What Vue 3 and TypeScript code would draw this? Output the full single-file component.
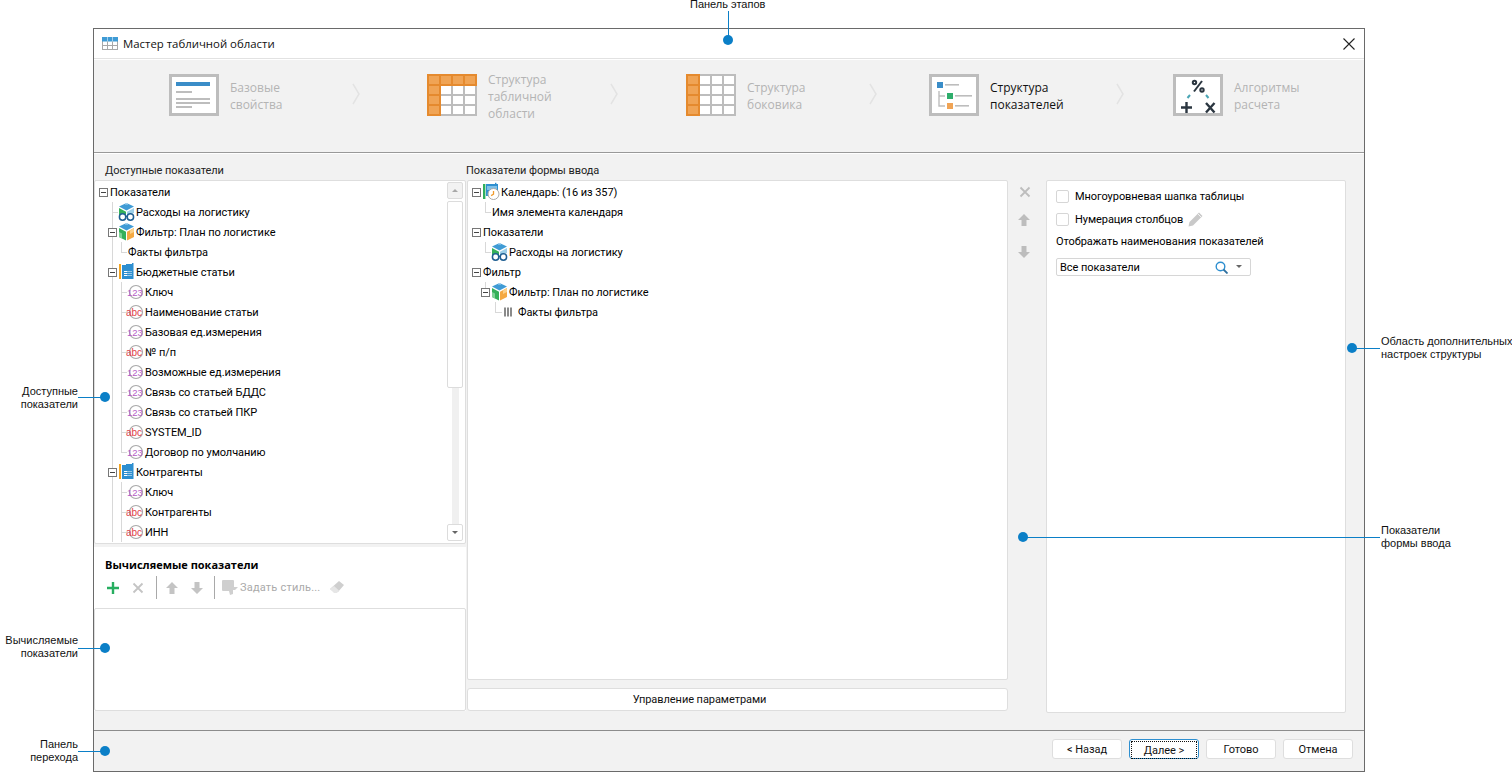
<script setup lang="ts">
interface Row {
  text: string
  pad: number
  exp?: boolean
  icon?: string
  iconW?: number
  gap?: number
  v?: number[]
  half?: number[]
  h?: [number, number]
}

const kid = (text: string, icon: string): Row => ({ text, pad: 33, icon, v: [18, 27], h: [27, 6] })
const lastKid = (text: string, icon: string): Row => ({ text, pad: 33, icon, v: [18], half: [27], h: [27, 6] })

const leftRows: Row[] = [
  { text: 'Показатели', pad: 5, exp: true },
  { text: 'Расходы на логистику', pad: 24, icon: 'i-cube-glasses', v: [18], h: [18, 6] },
  { text: 'Фильтр: План по логистике', pad: 14, exp: true, icon: 'i-cube', v: [18] },
  { text: 'Факты фильтра', pad: 34, v: [18], half: [27], h: [27, 6] },
  { text: 'Бюджетные статьи', pad: 14, exp: true, icon: 'i-dict', v: [18] },
  kid('Ключ', 'i-num'),
  kid('Наименование статьи', 'i-abc'),
  kid('Базовая ед.измерения', 'i-num'),
  kid('№ п/п', 'i-abc'),
  kid('Возможные ед.измерения', 'i-num'),
  kid('Связь со статьей БДДС', 'i-num'),
  kid('Связь со статьей ПКР', 'i-num'),
  kid('SYSTEM_ID', 'i-abc'),
  lastKid('Договор по умолчанию', 'i-num'),
  { text: 'Контрагенты', pad: 14, exp: true, icon: 'i-dict', v: [18] },
  kid('Ключ', 'i-num'),
  kid('Контрагенты', 'i-abc'),
  kid('ИНН', 'i-abc')
]

const midRows: Row[] = [
  { text: 'Календарь: (16 из 357)', pad: 5, exp: true, icon: 'i-cal', gap: 1 },
  { text: 'Имя элемента календаря', pad: 25, half: [18], h: [18, 6] },
  { text: 'Показатели', pad: 5, exp: true },
  { text: 'Расходы на логистику', pad: 24, icon: 'i-cube-glasses', half: [18], h: [18, 6] },
  { text: 'Фильтр', pad: 5, exp: true },
  { text: 'Фильтр: План по логистике', pad: 14, exp: true, icon: 'i-cube', half: [18] },
  { text: 'Факты фильтра', pad: 37, icon: 'i-bars', iconW: 8, gap: 6, half: [28], h: [28, 7] }
]

const trees = { leftRows, midRows }

interface Step {
  title: string[]
  icon: string
  width: number
  active?: boolean
  chevron?: boolean
}

const steps: Step[] = [
  { title: ['Базовые', 'свойства'], icon: 's-base', width: 258, chevron: true },
  { title: ['Структура', 'табличной', 'области'], icon: 's-table', width: 259, chevron: true },
  { title: ['Структура', 'боковика'], icon: 's-side', width: 243, chevron: true },
  { title: ['Структура', 'показателей'], icon: 's-tree', width: 244, active: true, chevron: true },
  { title: ['Алгоритмы', 'расчета'], icon: 's-calc', width: 180 }
]

const footerButtons = ['< Назад', 'Далее >', 'Готово', 'Отмена']
</script>

<template>
  <div class="page">
    <svg class="defs" width="0" height="0" aria-hidden="true">
      <defs>
        <symbol id="i-cube" viewBox="0 0 17 20">
          <polygon points="8.5,1 16,4.5 8.5,8.5 1,4.5" fill="#3f9bd5" />
          <rect x="7" y="1" width="3" height="1.6" fill="#9fd0ee" />
          <polygon points="1,6 8,9.8 8,18.5 1,15" fill="#35b05a" />
          <polygon points="9,9.8 16,6 16,15 9,18.5" fill="#f5a941" />
          <polygon points="1,10 4,11.6 4,16.5 1,15" fill="#7fd296" />
          <polygon points="12,8.4 16,6 16,10 12,12" fill="#fbd089" />
        </symbol>
        <symbol id="i-cube-glasses" viewBox="0 0 17 20">
          <polygon points="8.5,1 16,4.5 8.5,8.5 1,4.5" fill="#3f9bd5" />
          <rect x="7" y="1" width="3" height="1.6" fill="#9fd0ee" />
          <polygon points="1,6 8,9.8 8,13 1,13" fill="#35b05a" />
          <polygon points="9,9.8 16,6 16,11 9,13" fill="#9ccfe8" />
          <circle cx="4.6" cy="15" r="3.2" fill="#fff" stroke="#1f5f92" stroke-width="1.5" />
          <circle cx="12.4" cy="15" r="3.2" fill="#fff" stroke="#1f5f92" stroke-width="1.5" />
          <rect x="7.4" y="13.8" width="2.2" height="1.2" fill="#1f5f92" />
        </symbol>
        <symbol id="i-dict" viewBox="0 0 17 20">
          <rect x="1" y="2" width="2" height="15" fill="#f5a623" />
          <polygon points="4,3 8,3 8,2 14,2 14,1 15.5,1 15.5,17 4,17" fill="#2e8fd0" />
          <g fill="#fff">
            <rect x="6" y="9" width="3.500" height="1" />
            <rect x="6" y="11" width="3.500" height="1" />
            <rect x="6" y="13" width="3.500" height="1" />
            <rect x="10.500" y="9" width="1" height="1" />
            <rect x="12.500" y="9" width="1" height="1" />
            <rect x="10.500" y="11" width="1" height="1" />
            <rect x="12.500" y="11" width="1" height="1" />
            <rect x="10.500" y="13" width="1" height="1" />
            <rect x="12.500" y="13" width="1" height="1" />
          </g>
        </symbol>
        <symbol id="i-cal" viewBox="0 0 17 20">
          <rect x="0" y="2" width="2.4" height="15" fill="#2fae5c" />
          <rect x="3" y="2" width="12" height="12" fill="#2e8fd0" />
          <rect x="4" y="4" width="10" height="4" fill="#7ec0e8" />
          <rect x="12" y="0.8" width="1.4" height="3" fill="#2e8fd0" />
          <circle cx="10.5" cy="12" r="5.5" fill="#fff" stroke="#a8a8a8" stroke-width="1" />
          <path d="M10.5 9v3.2l-2.4 1.4" fill="none" stroke="#f09a2b" stroke-width="1.3" />
        </symbol>
        <symbol id="i-bars" viewBox="0 0 8 10">
          <rect x="0" y="0.5" width="2" height="9" fill="#8a8a8a" />
          <rect x="3" y="0.5" width="2" height="9" fill="#8a8a8a" />
          <rect x="6" y="0.5" width="2" height="9" fill="#8a8a8a" />
        </symbol>
        <symbol id="i-up" viewBox="0 0 14 14">
          <polygon points="7,1 13,7 9.5,7 9.5,13 4.5,13 4.5,7 1,7" fill="currentColor" />
        </symbol>
        <symbol id="i-down" viewBox="0 0 14 14">
          <polygon points="7,13 13,7 9.5,7 9.5,1 4.5,1 4.5,7 1,7" fill="currentColor" />
        </symbol>
        <symbol id="i-x" viewBox="0 0 12 12">
          <path d="M1.5 1.5l9 9M10.5 1.5l-9 9" stroke="currentColor" stroke-width="1.8" fill="none" />
        </symbol>
        <symbol id="s-base" viewBox="0 0 50 42">
          <rect x="1.5" y="1.5" width="47" height="39" fill="#fff" stroke="#bdbdbd" stroke-width="3" />
          <rect x="7" y="8" width="34" height="4" fill="#3a8dc8" />
          <g fill="#bdbdbd">
            <rect x="7" y="17" width="16" height="2" />
            <rect x="7" y="24" width="34" height="2" />
            <rect x="7" y="28" width="34" height="2" />
            <rect x="7" y="32" width="16" height="2" />
          </g>
        </symbol>
        <symbol id="s-table" viewBox="0 0 50 42">
          <rect width="50" height="42" fill="#bdbdbd" />
          <g fill="#fff">
            <rect x="14" y="12" width="10" height="8" /><rect x="26" y="12" width="10" height="8" /><rect x="38" y="12" width="10" height="8" />
            <rect x="14" y="22" width="10" height="8" /><rect x="26" y="22" width="10" height="8" /><rect x="38" y="22" width="10" height="8" />
            <rect x="14" y="32" width="10" height="8" /><rect x="26" y="32" width="10" height="8" /><rect x="38" y="32" width="10" height="8" />
          </g>
          <rect width="50" height="12" fill="#e58a2e" />
          <rect width="14" height="42" fill="#e58a2e" />
          <g fill="#f0a455">
            <rect x="2" y="2" width="10" height="8" /><rect x="14" y="2" width="10" height="8" /><rect x="26" y="2" width="10" height="8" /><rect x="38" y="2" width="10" height="8" />
            <rect x="2" y="12" width="10" height="8" /><rect x="2" y="22" width="10" height="8" /><rect x="2" y="32" width="10" height="8" />
          </g>
        </symbol>
        <symbol id="s-side" viewBox="0 0 50 42">
          <rect width="50" height="42" fill="#bdbdbd" />
          <g fill="#fff">
            <rect x="14" y="2" width="10" height="8" /><rect x="26" y="2" width="10" height="8" /><rect x="38" y="2" width="10" height="8" />
            <rect x="14" y="12" width="10" height="8" /><rect x="26" y="12" width="10" height="8" /><rect x="38" y="12" width="10" height="8" />
            <rect x="14" y="22" width="10" height="8" /><rect x="26" y="22" width="10" height="8" /><rect x="38" y="22" width="10" height="8" />
            <rect x="14" y="32" width="10" height="8" /><rect x="26" y="32" width="10" height="8" /><rect x="38" y="32" width="10" height="8" />
          </g>
          <rect width="14" height="42" fill="#e58a2e" />
          <g fill="#f0a455">
            <rect x="2" y="2" width="10" height="8" /><rect x="2" y="12" width="10" height="8" /><rect x="2" y="22" width="10" height="8" /><rect x="2" y="32" width="10" height="8" />
          </g>
        </symbol>
        <symbol id="s-tree" viewBox="0 0 50 42">
          <rect x="1.5" y="1.5" width="47" height="39" fill="#fff" stroke="#bdbdbd" stroke-width="3" />
          <rect x="8" y="8" width="6" height="6" fill="#3a8dc8" />
          <rect x="16" y="10" width="14" height="1.6" fill="#bdbdbd" />
          <path d="M10 17v15h6M10 22h6" fill="none" stroke="#bdbdbd" stroke-width="1.4" />
          <rect x="18" y="19" width="6" height="6" fill="#2fae6c" />
          <rect x="26" y="21" width="17" height="1.6" fill="#bdbdbd" />
          <rect x="18" y="29" width="6" height="6" fill="#f0a455" />
          <rect x="26" y="31" width="14" height="1.6" fill="#bdbdbd" />
        </symbol>
        <symbol id="s-calc" viewBox="0 0 50 42">
          <rect x="1.5" y="1.5" width="47" height="39" fill="#fff" stroke="#bdbdbd" stroke-width="3" />
          <g stroke="#2b3640" stroke-width="2" fill="none">
            <circle cx="21.5" cy="8.5" r="1.7" />
            <circle cx="29" cy="16" r="1.7" />
            <path d="M29 7l-8 10.5" />
            <path d="M8 33.5h11M13.5 28v11" stroke-width="2.4" />
            <path d="M33 29l8.5 9.5M41.500 29L33 38.500" stroke-width="2.400" />
          </g>
          <path d="M14.500 24l2.500-3M33 21l2.500 3" stroke="#4aa6b5" stroke-width="2" fill="none" />
        </symbol>
      </defs>
    </svg>

    <div class="window">
      <header class="titlebar">
        <svg class="title-icon" width="16" height="13" viewBox="0 0 16 13">
          <rect x="0.500" y="0.500" width="15" height="12" fill="#fff" stroke="#a8a8a8" />
          <rect x="0" y="0" width="16" height="4.500" fill="#3f9bd5" />
          <path d="M5.500 0v13M10.500 0v13M0 8.500h16" stroke="#a8a8a8" fill="none" />
          <path d="M5.500 0v4.500M10.500 0v4.500" stroke="#9fd0ee" fill="none" />
        </svg>
        <span class="title-text">Мастер табличной области</span>
        <svg class="close" width="12" height="12" viewBox="0 0 12 12">
          <path d="M0.500 0.500l11 11M11.500 0.500l-11 11" stroke="#222" stroke-width="1.100" fill="none" />
        </svg>
      </header>

      <nav class="steps">
        <div v-for="s in steps" :key="s.icon" class="step" :style="{ width: s.width + 'px' }">
          <svg class="step-icon" width="50" height="42"><use :href="'#' + s.icon" /></svg>
          <div class="step-label" :class="{ active: s.active }">
            <div v-for="t in s.title" :key="t">{{ t }}</div>
          </div>
          <svg v-if="s.chevron" class="chevron" width="8" height="22" viewBox="0 0 8 22">
            <path d="M1 1l6 10-6 10" fill="none" stroke="#e3e3e3" stroke-width="1.500" />
          </svg>
        </div>
      </nav>

      <main class="content">
        <section class="col-left">
          <div class="caption">Доступные показатели</div>
          <div class="tree tree-left">
            <div v-for="(r, i) in trees.leftRows" :key="i" class="row" :style="{ paddingLeft: r.pad + 'px' }">
              <i v-for="x in r.v" :key="x" class="guide" :style="{ left: x + 'px' }"></i>
              <i v-for="x in r.half" :key="x" class="guide half" :style="{ left: x + 'px' }"></i>
              <i v-if="r.h" class="hguide" :style="{ left: r.h[0] + 'px', width: r.h[1] + 'px' }"></i>
              <span v-if="r.exp" class="exp"></span>
              <svg v-if="r.icon === 'i-num'" class="icon" width="17" height="20" viewBox="0 0 17 20">
                <circle cx="9" cy="10" r="6.500" fill="#fff" stroke="#a9a9a9" stroke-width="1.200" />
                <text x="0" y="13.500" class="icon-num">123</text>
              </svg>
              <svg v-else-if="r.icon === 'i-abc'" class="icon" width="17" height="20" viewBox="0 0 17 20">
                <circle cx="9" cy="10" r="6.500" fill="#fff" stroke="#a9a9a9" stroke-width="1.200" />
                <text x="-1" y="13.500" class="icon-abc">abc</text>
              </svg>
              <svg
                v-else-if="r.icon"
                class="icon"
                :width="r.iconW ?? 17"
                :height="r.iconW ? 10 : 20"
              ><use :href="'#' + r.icon" /></svg>
              <span class="row-text">{{ r.text }}</span>
            </div>
            <div class="scrollbar">
              <div class="sb-btn"><span class="tri-up"></span></div>
              <div class="sb-thumb"></div>
              <div class="sb-track"></div>
              <div class="sb-btn"><span class="tri-down"></span></div>
            </div>
          </div>
          <div class="calc">
            <div class="calc-title">Вычисляемые показатели</div>
            <div class="toolbar">
              <svg class="tb-plus" width="12" height="12" viewBox="0 0 12 12">
                <path d="M6 0v12M0 6h12" stroke="#27ae60" stroke-width="2.400" fill="none" />
              </svg>
              <svg class="tb-x" width="12" height="12"><use href="#i-x" /></svg>
              <span class="tb-sep sep-a"></span>
              <svg class="tb-up" width="14" height="14"><use href="#i-up" /></svg>
              <svg class="tb-down" width="14" height="14"><use href="#i-down" /></svg>
              <span class="tb-sep sep-b"></span>
              <svg class="tb-style" width="18" height="17" viewBox="0 0 18 17">
                <path d="M0 2a1 1 0 0 1 1-1h10a1 1 0 0 1 1 1v6h4l-3 3h-2v4l-3 1-1-4H1a1 1 0 0 1-1-1z" fill="#cfcfcf" />
              </svg>
              <span class="tb-text">Задать стиль...</span>
              <svg class="tb-eraser" width="16" height="15" viewBox="0 0 16 15">
                <path d="M10 1l5 4-6 7H5L1 9z" fill="#cfcfcf" />
                <path d="M1 9l4 4h3l2-2.500L5 6z" fill="#e6e6e6" />
              </svg>
            </div>
            <div class="calc-list"></div>
          </div>
        </section>

        <section class="col-mid">
          <div class="caption caption-mid">Показатели формы ввода</div>
          <div class="tree tree-mid">
            <div v-for="(r, i) in trees.midRows" :key="i" class="row" :style="{ paddingLeft: r.pad + 'px' }">
              <i v-for="x in r.half" :key="x" class="guide half" :style="{ left: x + 'px' }"></i>
              <i v-if="r.h" class="hguide" :style="{ left: r.h[0] + 'px', width: r.h[1] + 'px' }"></i>
              <span v-if="r.exp" class="exp"></span>
              <svg
                v-if="r.icon"
                class="icon"
                :style="{ marginLeft: r.gap === 1 ? '1px' : undefined, marginRight: r.gap ? r.gap + 'px' : undefined }"
                :width="r.iconW ?? 17"
                :height="r.iconW ? 10 : 20"
              ><use :href="'#' + r.icon" /></svg>
              <span class="row-text">{{ r.text }}</span>
            </div>
          </div>
          <button class="wide-btn">Управление параметрами</button>
        </section>

        <aside class="side-tools">
          <svg class="st-x" width="12" height="12"><use href="#i-x" /></svg>
          <svg class="st-up" width="14" height="14"><use href="#i-up" /></svg>
          <svg class="st-down" width="14" height="14"><use href="#i-down" /></svg>
        </aside>

        <section class="col-right">
          <label class="check"><span class="box"></span>Многоуровневая шапка таблицы</label>
          <label class="check check-2">
            <span class="box"></span>Нумерация столбцов
            <svg class="pencil" width="15" height="15" viewBox="0 0 15 15">
              <path d="M11 0.500l3.500 3.500L5 13.500 0.500 14.500 1.500 10z" fill="#c9c9c9" />
              <path d="M10 2l3 3" stroke="#fff" stroke-width="0.800" />
            </svg>
          </label>
          <div class="opt-label">Отображать наименования показателей</div>
          <div class="combo">
            <span class="combo-text">Все показатели</span>
            <svg class="combo-search" width="13" height="13" viewBox="0 0 13 13">
              <circle cx="5.500" cy="5.500" r="4.300" fill="none" stroke="#2e8fd0" stroke-width="1.400" />
              <path d="M8.500 8.500l4 4" stroke="#2e6f9e" stroke-width="1.800" />
            </svg>
            <span class="tri-down combo-tri"></span>
          </div>
        </section>
      </main>

      <footer class="footer">
        <button v-for="(b, i) in footerButtons" :key="b" class="btn" :class="{ focused: i === 1 }">
          <span>{{ b }}</span>
        </button>
      </footer>
    </div>

    <div class="note note-top">Панель этапов</div>
    <i class="vline vl-top"></i><i class="dot dot-top"></i>

    <div class="note note-left n-l1">Доступные<br />показатели</div>
    <i class="hline hl-1"></i><i class="dot dot-l1"></i>
    <div class="note note-left n-l2">Вычисляемые<br />показатели</div>
    <i class="hline hl-2"></i><i class="dot dot-l2"></i>
    <div class="note note-left n-l3">Панель<br />перехода</div>
    <i class="hline hl-3"></i><i class="dot dot-l3"></i>

    <div class="note n-r1">Область дополнительных<br />настроек структуры</div>
    <i class="hline hl-r1"></i><i class="dot dot-r1"></i>
    <div class="note n-r2">Показатели<br />формы ввода</div>
    <i class="hline hl-r2"></i><i class="dot dot-r2"></i>
  </div>
</template>

<style>
html,
body {
  margin: 0;
  background: #fff;
  overflow: hidden;
}
</style>

<style scoped>
.page {
  position: relative;
  width: 1512px;
  height: 772px;
  padding: 28px 0 0 93px;
  box-sizing: border-box;
  font-family: Roboto, "Noto Sans", sans-serif;
  font-size: 11px;
  letter-spacing: -0.06px;
  color: #000;
  overflow: hidden;
}
.defs {
  position: absolute;
}
.window {
  width: 1272px;
  height: 744px;
  box-sizing: border-box;
  border: 1px solid #6a6a6a;
  background: #f2f2f2;
  display: flex;
  flex-direction: column;
}
.titlebar {
  height: 30px;
  box-sizing: border-box;
  flex: none;
  background: #fff;
  display: flex;
  align-items: center;
  padding: 0 9px 0 8px;
  border-bottom: 1px solid #e2e2e2;
}
.title-icon {
  flex: none;
}
.title-text {
  margin-left: 5px;
  font-family: "Open Sans", sans-serif;
  font-size: 11.400px;
  letter-spacing: 0;
  color: #111;
}
.close {
  margin-left: auto;
}
.steps {
  height: 94px;
  flex: none;
  box-sizing: border-box;
  border-top: 1px solid #fff;
  border-bottom: 1px solid #999;
  padding: 14px 0 0 75px;
  display: flex;
  align-items: flex-start;
}
.step {
  position: relative;
  flex: none;
  display: flex;
  align-items: flex-start;
  gap: 11px;
}
.step-icon {
  flex: none;
}
.step-label {
  font-family: "Open Sans", sans-serif;
  letter-spacing: 0;
  color: #b4b4b4;
  font-size: 12px;
  line-height: 17px;
  padding-top: 6px;
  margin-top: -1px;
}
.step-label.active {
  color: #111;
}
.step:nth-child(2) .step-label {
  margin-top: -3px;
  padding-top: 0;
}
.chevron {
  position: absolute;
  left: 183px;
  top: 9px;
}
.step:nth-child(4) .chevron {
  left: 187px;
}
.content {
  flex: 1;
  display: flex;
  padding-top: 8px;
  min-height: 0;
  border-top: 1px solid #fff;
}
.caption {
  height: 18px;
  line-height: 17px;
  padding-left: 11px;
  color: #222;
}
.caption-mid {
  padding-left: 0;
  margin-left: -1px;
}
.col-left {
  width: 372px;
  flex: none;
  margin-right: 1px;
}
.tree {
  position: relative;
  box-sizing: border-box;
  background: #fff;
  border: 1px solid #dedede;
  border-radius: 2px;
  padding-top: 1px;
  overflow: hidden;
}
.tree-left {
  height: 364px;
}
.row {
  position: relative;
  height: 20px;
  display: flex;
  align-items: center;
  box-sizing: border-box;
  margin-left: -1px;
  white-space: nowrap;
}
.row-text {
  position: relative;
  color: #000;
}
.exp {
  position: relative;
  z-index: 1;
  width: 9px;
  height: 9px;
  flex: none;
  box-sizing: border-box;
  border: 1px solid #777;
  background: linear-gradient(#444, #444) center / 5px 1px no-repeat #fff;
  margin-right: 1px;
}
.exp + .row-text {
  margin-left: 1px;
}
.icon {
  position: relative;
  flex: none;
  margin-right: 1px;
  overflow: visible;
}
.icon-num {
  font-family: "Liberation Sans", sans-serif;
  font-size: 9.500px;
  fill: #b55dc6;
}
.icon-abc {
  font-family: "Liberation Sans", sans-serif;
  font-size: 10px;
  fill: #e0424a;
}
.guide {
  position: absolute;
  top: 0;
  bottom: 0;
  width: 1px;
  background: #d8d8d8;
}
.guide.half {
  bottom: 50%;
}
.hguide {
  position: absolute;
  top: 50%;
  height: 1px;
  background: #d8d8d8;
}
.scrollbar {
  position: absolute;
  right: 2px;
  top: 1px;
  bottom: 2px;
  width: 16px;
  display: flex;
  flex-direction: column;
  align-items: center;
}
.sb-btn {
  width: 16px;
  height: 17px;
  box-sizing: border-box;
  border: 1px solid #dcdcdc;
  border-radius: 2px;
  background: #fff;
  flex: none;
  display: flex;
  align-items: center;
  justify-content: center;
}
.scrollbar .sb-btn:first-child {
  background: #f2f2f2;
}
.sb-thumb {
  width: 16px;
  height: 187px;
  margin-top: 2px;
  box-sizing: border-box;
  border: 1px solid #dcdcdc;
  border-radius: 2px;
  background: #fff;
  flex: none;
}
.sb-track {
  width: 7px;
  flex: 1;
  background: #f0f0f0;
}
.tri-up {
  width: 0;
  height: 0;
  border-left: 3px solid transparent;
  border-right: 3px solid transparent;
  border-bottom: 3px solid #a8a8a8;
}
.tri-down {
  width: 0;
  height: 0;
  border-left: 3px solid transparent;
  border-right: 3px solid transparent;
  border-top: 3px solid #666;
}
.calc {
  margin-top: 3px;
  height: 164px;
  box-sizing: border-box;
  background: #fff;
  display: flex;
  flex-direction: column;
}
.calc-title {
  font-family: "Open Sans", sans-serif;
  letter-spacing: 0;
  font-weight: 700;
  padding-left: 11px;
  margin-top: 10px;
  line-height: 16px;
  height: 16px;
}
.toolbar {
  height: 29px;
  margin-top: 0;
  display: flex;
  align-items: center;
  color: #c4c4c4;
  flex: none;
}
.tb-plus {
  margin-left: 13px;
}
.tb-x {
  margin-left: 13px;
}
.tb-sep {
  width: 1px;
  height: 23px;
  background: #a9a9a9;
}
.sep-a {
  margin-left: 12px;
}
.tb-up {
  margin-left: 8px;
}
.tb-down {
  margin-left: 11px;
}
.sep-b {
  margin-left: 10px;
}
.tb-style {
  margin-left: 7px;
}
.tb-text {
  margin-left: 0;
  letter-spacing: 0.2px;
  color: #aaa;
}
.tb-eraser {
  margin-left: 9px;
}
.calc-list {
  flex: 1;
  margin-top: 6px;
  background: #fff;
  border: 1px solid #dedede;
  border-radius: 2px;
}
.col-mid {
  width: 541px;
  flex: none;
  display: flex;
  flex-direction: column;
}
.tree-mid {
  height: 500px;
}
.wide-btn {
  height: 23px;
  margin-top: 8px;
  background: #fff;
  border: 1px solid #dedede;
  border-radius: 3px;
  font: inherit;
  letter-spacing: inherit;
  color: #111;
  padding: 0 76px 0 0;
}
.side-tools {
  width: 38px;
  flex: none;
  display: flex;
  flex-direction: column;
  align-items: flex-start;
  color: #bdbdbd;
}
.st-x {
  margin: 24px 0 0 11px;
}
.st-up {
  margin: 15px 0 0 9px;
}
.st-down {
  margin: 18px 0 0 9px;
}
.col-right {
  width: 300px;
  height: 533px;
  margin-top: 18px;
  flex: none;
  box-sizing: border-box;
  background: #fff;
  border: 1px solid #dedede;
  border-radius: 2px;
  padding: 7px 9px;
}
.check {
  display: flex;
  align-items: center;
  height: 17px;
  white-space: nowrap;
}
.check-2 {
  margin-top: 6px;
}
.box {
  width: 13px;
  height: 13px;
  box-sizing: border-box;
  border: 1px solid #d6d6d6;
  border-radius: 2px;
  background: #fff;
  margin-right: 6px;
  flex: none;
}
.pencil {
  margin-left: 5px;
}
.opt-label {
  margin-top: 5px;
  line-height: 17px;
  height: 17px;
}
.combo {
  margin-top: 8px;
  width: 195px;
  height: 18px;
  box-sizing: border-box;
  border: 1px solid #d6d6d6;
  border-radius: 2px;
  display: flex;
  align-items: center;
  padding-left: 3px;
}
.combo-search {
  margin-left: auto;
}
.combo-tri {
  margin: 0 8px 2px 8px;
}
.footer {
  height: 41px;
  flex: none;
  box-sizing: border-box;
  border-top: 1px solid #8c8c8c;
  display: flex;
  justify-content: flex-end;
  align-items: flex-start;
  gap: 7px;
  padding: 8px 11px 0 0;
}
.btn {
  width: 70px;
  height: 20px;
  background: #fff;
  border: 1px solid #dedede;
  border-radius: 3px;
  font: inherit;
  letter-spacing: inherit;
  color: #111;
  padding: 0;
}
.btn.focused {
  border-color: #2e8fd0;
  position: relative;
}
.btn.focused span {
  display: flex;
  align-items: center;
  justify-content: center;
  height: 16px;
  margin: 1px;
  border: 1px dotted #111;
}
.note {
  position: absolute;
  font-family: "Liberation Sans", Arial, sans-serif;
  font-size: 11px;
  letter-spacing: 0;
  line-height: 13px;
  color: #111;
  white-space: nowrap;
}
.note-left {
  text-align: right;
  right: 1434px;
}
.note-top {
  left: 690px;
  top: 0;
  line-height: 9px;
}
.n-l1 {
  top: 385px;
}
.n-l2 {
  top: 634px;
}
.n-l3 {
  top: 738px;
}
.n-r1 {
  left: 1381px;
  top: 335px;
}
.n-r2 {
  left: 1381px;
  top: 524px;
}
.dot {
  position: absolute;
  width: 10px;
  height: 10px;
  border-radius: 50%;
  background: #0b7fc7;
}
.vline,
.hline {
  position: absolute;
  background: #0b7fc7;
}
.vline {
  width: 1px;
}
.hline {
  height: 1px;
}
.vl-top {
  left: 728px;
  top: 11px;
  height: 28px;
}
.dot-top {
  left: 723px;
  top: 35px;
}
.hl-1 {
  left: 78px;
  top: 397px;
  width: 26px;
}
.dot-l1 {
  left: 100px;
  top: 392px;
}
.hl-2 {
  left: 78px;
  top: 648px;
  width: 26px;
}
.dot-l2 {
  left: 100px;
  top: 643px;
}
.hl-3 {
  left: 78px;
  top: 751px;
  width: 26px;
}
.dot-l3 {
  left: 100px;
  top: 746px;
}
.hl-r1 {
  left: 1352px;
  top: 348px;
  width: 28px;
}
.dot-r1 {
  left: 1347px;
  top: 343px;
}
.hl-r2 {
  left: 1023px;
  top: 537px;
  width: 357px;
}
.dot-r2 {
  left: 1018px;
  top: 532px;
}
</style>
